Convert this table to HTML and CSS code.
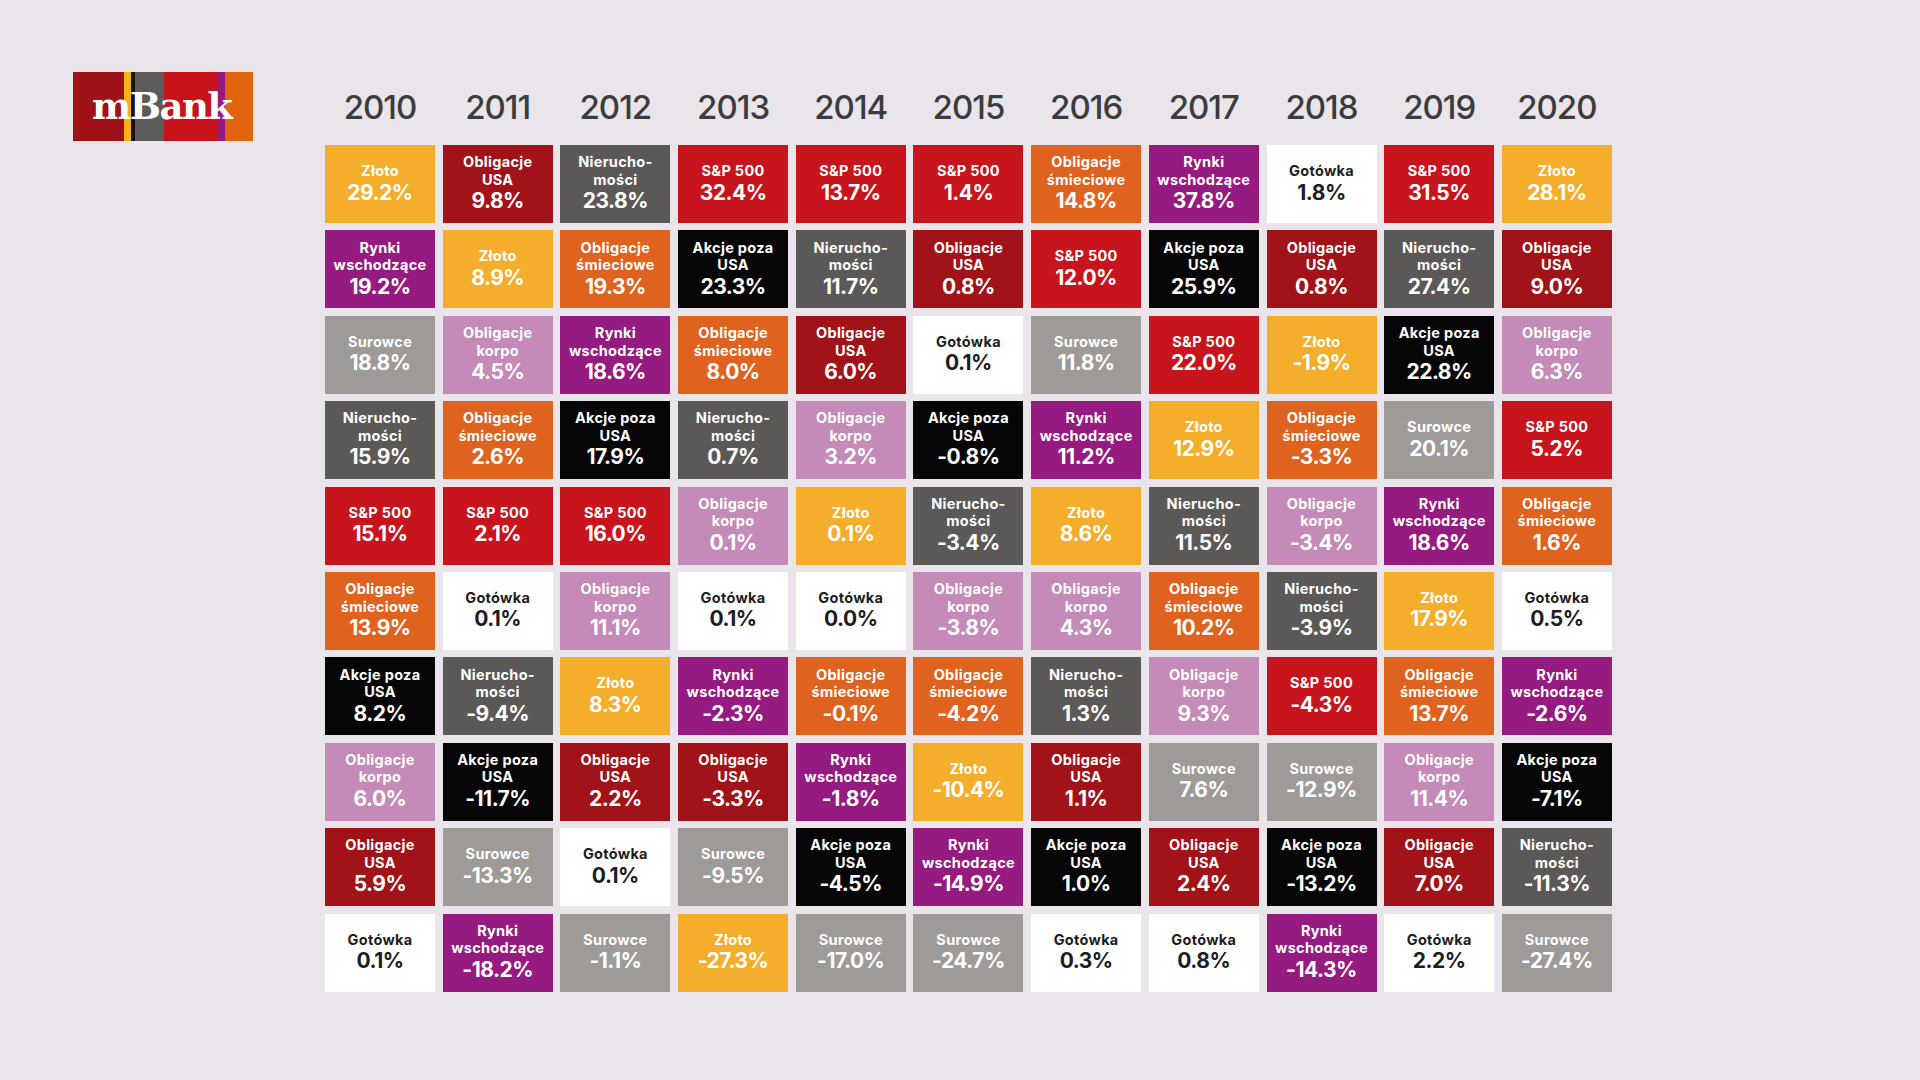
FILE: index.html
```html
<!DOCTYPE html>
<html lang="pl">
<head>
<meta charset="utf-8">
<title>mBank – stopy zwrotu 2010–2020</title>
<link rel="stylesheet" href="styles.css">
</head>
<body>
<div class="page">
  <div class="logo">
    <div class="stripes">
      <span class="s s1"></span><span class="s s2"></span><span class="s s3"></span><span class="s s4"></span><span class="s s5"></span><span class="s s6"></span><span class="s s7"></span>
    </div>
    <span class="logo-text">mBank</span>
  </div>
  <div class="chart">
    <div class="years">
      <div>2010</div><div>2011</div><div>2012</div><div>2013</div><div>2014</div><div>2015</div><div>2016</div><div>2017</div><div>2018</div><div>2019</div><div>2020</div>
    </div>
    <div class="grid">
      <!-- 2010 -->
      <div class="cell zl"><span class="lbl">Złoto</span><span class="pct">29.2%</span></div>
      <div class="cell ryn"><span class="lbl">Rynki<br>wschodzące</span><span class="pct">19.2%</span></div>
      <div class="cell sur"><span class="lbl">Surowce</span><span class="pct">18.8%</span></div>
      <div class="cell nier"><span class="lbl">Nierucho-<br>mości</span><span class="pct">15.9%</span></div>
      <div class="cell sp"><span class="lbl">S&amp;P 500</span><span class="pct">15.1%</span></div>
      <div class="cell smi"><span class="lbl">Obligacje<br>śmieciowe</span><span class="pct">13.9%</span></div>
      <div class="cell akc"><span class="lbl">Akcje poza<br>USA</span><span class="pct">8.2%</span></div>
      <div class="cell korp"><span class="lbl">Obligacje<br>korpo</span><span class="pct">6.0%</span></div>
      <div class="cell usa"><span class="lbl">Obligacje<br>USA</span><span class="pct">5.9%</span></div>
      <div class="cell got"><span class="lbl">Gotówka</span><span class="pct">0.1%</span></div>
      <!-- 2011 -->
      <div class="cell usa"><span class="lbl">Obligacje<br>USA</span><span class="pct">9.8%</span></div>
      <div class="cell zl"><span class="lbl">Złoto</span><span class="pct">8.9%</span></div>
      <div class="cell korp"><span class="lbl">Obligacje<br>korpo</span><span class="pct">4.5%</span></div>
      <div class="cell smi"><span class="lbl">Obligacje<br>śmieciowe</span><span class="pct">2.6%</span></div>
      <div class="cell sp"><span class="lbl">S&amp;P 500</span><span class="pct">2.1%</span></div>
      <div class="cell got"><span class="lbl">Gotówka</span><span class="pct">0.1%</span></div>
      <div class="cell nier"><span class="lbl">Nierucho-<br>mości</span><span class="pct">-9.4%</span></div>
      <div class="cell akc"><span class="lbl">Akcje poza<br>USA</span><span class="pct">-11.7%</span></div>
      <div class="cell sur"><span class="lbl">Surowce</span><span class="pct">-13.3%</span></div>
      <div class="cell ryn"><span class="lbl">Rynki<br>wschodzące</span><span class="pct">-18.2%</span></div>
      <!-- 2012 -->
      <div class="cell nier"><span class="lbl">Nierucho-<br>mości</span><span class="pct">23.8%</span></div>
      <div class="cell smi"><span class="lbl">Obligacje<br>śmieciowe</span><span class="pct">19.3%</span></div>
      <div class="cell ryn"><span class="lbl">Rynki<br>wschodzące</span><span class="pct">18.6%</span></div>
      <div class="cell akc"><span class="lbl">Akcje poza<br>USA</span><span class="pct">17.9%</span></div>
      <div class="cell sp"><span class="lbl">S&amp;P 500</span><span class="pct">16.0%</span></div>
      <div class="cell korp"><span class="lbl">Obligacje<br>korpo</span><span class="pct">11.1%</span></div>
      <div class="cell zl"><span class="lbl">Złoto</span><span class="pct">8.3%</span></div>
      <div class="cell usa"><span class="lbl">Obligacje<br>USA</span><span class="pct">2.2%</span></div>
      <div class="cell got"><span class="lbl">Gotówka</span><span class="pct">0.1%</span></div>
      <div class="cell sur"><span class="lbl">Surowce</span><span class="pct">-1.1%</span></div>
      <!-- 2013 -->
      <div class="cell sp"><span class="lbl">S&amp;P 500</span><span class="pct">32.4%</span></div>
      <div class="cell akc"><span class="lbl">Akcje poza<br>USA</span><span class="pct">23.3%</span></div>
      <div class="cell smi"><span class="lbl">Obligacje<br>śmieciowe</span><span class="pct">8.0%</span></div>
      <div class="cell nier"><span class="lbl">Nierucho-<br>mości</span><span class="pct">0.7%</span></div>
      <div class="cell korp"><span class="lbl">Obligacje<br>korpo</span><span class="pct">0.1%</span></div>
      <div class="cell got"><span class="lbl">Gotówka</span><span class="pct">0.1%</span></div>
      <div class="cell ryn"><span class="lbl">Rynki<br>wschodzące</span><span class="pct">-2.3%</span></div>
      <div class="cell usa"><span class="lbl">Obligacje<br>USA</span><span class="pct">-3.3%</span></div>
      <div class="cell sur"><span class="lbl">Surowce</span><span class="pct">-9.5%</span></div>
      <div class="cell zl"><span class="lbl">Złoto</span><span class="pct">-27.3%</span></div>
      <!-- 2014 -->
      <div class="cell sp"><span class="lbl">S&amp;P 500</span><span class="pct">13.7%</span></div>
      <div class="cell nier"><span class="lbl">Nierucho-<br>mości</span><span class="pct">11.7%</span></div>
      <div class="cell usa"><span class="lbl">Obligacje<br>USA</span><span class="pct">6.0%</span></div>
      <div class="cell korp"><span class="lbl">Obligacje<br>korpo</span><span class="pct">3.2%</span></div>
      <div class="cell zl"><span class="lbl">Złoto</span><span class="pct">0.1%</span></div>
      <div class="cell got"><span class="lbl">Gotówka</span><span class="pct">0.0%</span></div>
      <div class="cell smi"><span class="lbl">Obligacje<br>śmieciowe</span><span class="pct">-0.1%</span></div>
      <div class="cell ryn"><span class="lbl">Rynki<br>wschodzące</span><span class="pct">-1.8%</span></div>
      <div class="cell akc"><span class="lbl">Akcje poza<br>USA</span><span class="pct">-4.5%</span></div>
      <div class="cell sur"><span class="lbl">Surowce</span><span class="pct">-17.0%</span></div>
      <!-- 2015 -->
      <div class="cell sp"><span class="lbl">S&amp;P 500</span><span class="pct">1.4%</span></div>
      <div class="cell usa"><span class="lbl">Obligacje<br>USA</span><span class="pct">0.8%</span></div>
      <div class="cell got"><span class="lbl">Gotówka</span><span class="pct">0.1%</span></div>
      <div class="cell akc"><span class="lbl">Akcje poza<br>USA</span><span class="pct">-0.8%</span></div>
      <div class="cell nier"><span class="lbl">Nierucho-<br>mości</span><span class="pct">-3.4%</span></div>
      <div class="cell korp"><span class="lbl">Obligacje<br>korpo</span><span class="pct">-3.8%</span></div>
      <div class="cell smi"><span class="lbl">Obligacje<br>śmieciowe</span><span class="pct">-4.2%</span></div>
      <div class="cell zl"><span class="lbl">Złoto</span><span class="pct">-10.4%</span></div>
      <div class="cell ryn"><span class="lbl">Rynki<br>wschodzące</span><span class="pct">-14.9%</span></div>
      <div class="cell sur"><span class="lbl">Surowce</span><span class="pct">-24.7%</span></div>
      <!-- 2016 -->
      <div class="cell smi"><span class="lbl">Obligacje<br>śmieciowe</span><span class="pct">14.8%</span></div>
      <div class="cell sp"><span class="lbl">S&amp;P 500</span><span class="pct">12.0%</span></div>
      <div class="cell sur"><span class="lbl">Surowce</span><span class="pct">11.8%</span></div>
      <div class="cell ryn"><span class="lbl">Rynki<br>wschodzące</span><span class="pct">11.2%</span></div>
      <div class="cell zl"><span class="lbl">Złoto</span><span class="pct">8.6%</span></div>
      <div class="cell korp"><span class="lbl">Obligacje<br>korpo</span><span class="pct">4.3%</span></div>
      <div class="cell nier"><span class="lbl">Nierucho-<br>mości</span><span class="pct">1.3%</span></div>
      <div class="cell usa"><span class="lbl">Obligacje<br>USA</span><span class="pct">1.1%</span></div>
      <div class="cell akc"><span class="lbl">Akcje poza<br>USA</span><span class="pct">1.0%</span></div>
      <div class="cell got"><span class="lbl">Gotówka</span><span class="pct">0.3%</span></div>
      <!-- 2017 -->
      <div class="cell ryn"><span class="lbl">Rynki<br>wschodzące</span><span class="pct">37.8%</span></div>
      <div class="cell akc"><span class="lbl">Akcje poza<br>USA</span><span class="pct">25.9%</span></div>
      <div class="cell sp"><span class="lbl">S&amp;P 500</span><span class="pct">22.0%</span></div>
      <div class="cell zl"><span class="lbl">Złoto</span><span class="pct">12.9%</span></div>
      <div class="cell nier"><span class="lbl">Nierucho-<br>mości</span><span class="pct">11.5%</span></div>
      <div class="cell smi"><span class="lbl">Obligacje<br>śmieciowe</span><span class="pct">10.2%</span></div>
      <div class="cell korp"><span class="lbl">Obligacje<br>korpo</span><span class="pct">9.3%</span></div>
      <div class="cell sur"><span class="lbl">Surowce</span><span class="pct">7.6%</span></div>
      <div class="cell usa"><span class="lbl">Obligacje<br>USA</span><span class="pct">2.4%</span></div>
      <div class="cell got"><span class="lbl">Gotówka</span><span class="pct">0.8%</span></div>
      <!-- 2018 -->
      <div class="cell got"><span class="lbl">Gotówka</span><span class="pct">1.8%</span></div>
      <div class="cell usa"><span class="lbl">Obligacje<br>USA</span><span class="pct">0.8%</span></div>
      <div class="cell zl"><span class="lbl">Złoto</span><span class="pct">-1.9%</span></div>
      <div class="cell smi"><span class="lbl">Obligacje<br>śmieciowe</span><span class="pct">-3.3%</span></div>
      <div class="cell korp"><span class="lbl">Obligacje<br>korpo</span><span class="pct">-3.4%</span></div>
      <div class="cell nier"><span class="lbl">Nierucho-<br>mości</span><span class="pct">-3.9%</span></div>
      <div class="cell sp"><span class="lbl">S&amp;P 500</span><span class="pct">-4.3%</span></div>
      <div class="cell sur"><span class="lbl">Surowce</span><span class="pct">-12.9%</span></div>
      <div class="cell akc"><span class="lbl">Akcje poza<br>USA</span><span class="pct">-13.2%</span></div>
      <div class="cell ryn"><span class="lbl">Rynki<br>wschodzące</span><span class="pct">-14.3%</span></div>
      <!-- 2019 -->
      <div class="cell sp"><span class="lbl">S&amp;P 500</span><span class="pct">31.5%</span></div>
      <div class="cell nier"><span class="lbl">Nierucho-<br>mości</span><span class="pct">27.4%</span></div>
      <div class="cell akc"><span class="lbl">Akcje poza<br>USA</span><span class="pct">22.8%</span></div>
      <div class="cell sur"><span class="lbl">Surowce</span><span class="pct">20.1%</span></div>
      <div class="cell ryn"><span class="lbl">Rynki<br>wschodzące</span><span class="pct">18.6%</span></div>
      <div class="cell zl"><span class="lbl">Złoto</span><span class="pct">17.9%</span></div>
      <div class="cell smi"><span class="lbl">Obligacje<br>śmieciowe</span><span class="pct">13.7%</span></div>
      <div class="cell korp"><span class="lbl">Obligacje<br>korpo</span><span class="pct">11.4%</span></div>
      <div class="cell usa"><span class="lbl">Obligacje<br>USA</span><span class="pct">7.0%</span></div>
      <div class="cell got"><span class="lbl">Gotówka</span><span class="pct">2.2%</span></div>
      <!-- 2020 -->
      <div class="cell zl"><span class="lbl">Złoto</span><span class="pct">28.1%</span></div>
      <div class="cell usa"><span class="lbl">Obligacje<br>USA</span><span class="pct">9.0%</span></div>
      <div class="cell korp"><span class="lbl">Obligacje<br>korpo</span><span class="pct">6.3%</span></div>
      <div class="cell sp"><span class="lbl">S&amp;P 500</span><span class="pct">5.2%</span></div>
      <div class="cell smi"><span class="lbl">Obligacje<br>śmieciowe</span><span class="pct">1.6%</span></div>
      <div class="cell got"><span class="lbl">Gotówka</span><span class="pct">0.5%</span></div>
      <div class="cell ryn"><span class="lbl">Rynki<br>wschodzące</span><span class="pct">-2.6%</span></div>
      <div class="cell akc"><span class="lbl">Akcje poza<br>USA</span><span class="pct">-7.1%</span></div>
      <div class="cell nier"><span class="lbl">Nierucho-<br>mości</span><span class="pct">-11.3%</span></div>
      <div class="cell sur"><span class="lbl">Surowce</span><span class="pct">-27.4%</span></div>
    </div>
  </div>
</div>
</body>
</html>
```
FILE: styles.css
```css
html, body {
  margin: 0;
  padding: 0;
  background: #e9e5ea;
}
body {
  width: 1920px;
  height: 1080px;
  overflow: hidden;
  font-family: Inter, "Noto Sans", sans-serif;
}
.page {
  display: flex;
  align-items: flex-start;
  padding: 72px 0 0 73px;
}

/* logo */
.logo {
  position: relative;
  width: 180px;
  height: 69px;
  flex: none;
}
.stripes {
  display: flex;
  height: 100%;
}
.s { display: block; height: 100%; }
.s1 { width: 51px; background: #a11218; }
.s2 { width: 7px; background: #f5b21b; }
.s3 { width: 4px; background: #151313; }
.s4 { width: 29px; background: #5d5c5b; }
.s5 { width: 52.5px; background: #c8131b; }
.s6 { width: 8.5px; background: #951a80; }
.s7 { width: 28px; background: #e2640f; }
.logo-text {
  position: absolute;
  left: 19px;
  top: 9px;
  font-family: "DejaVu Serif", "Liberation Serif", serif;
  font-weight: 700;
  font-size: 37px;
  line-height: 50px;
  letter-spacing: -1.5px;
  color: #ffffff;
}

/* chart */
.chart {
  margin-left: 72px;
}
.years {
  display: grid;
  grid-template-columns: repeat(11, 110px);
  column-gap: 7.7px;
  height: 73px;
  font-family: Inter, "Open Sans", sans-serif;
  font-weight: 500;
  font-size: 33px;
  line-height: 71px;
  color: #3c3b3e;
  text-align: center;
  letter-spacing: -1px;
}
.grid {
  display: grid;
  grid-template-columns: repeat(11, 110px);
  grid-template-rows: repeat(10, 78px);
  column-gap: 7.7px;
  row-gap: 7.4px;
  grid-auto-flow: column;
}
.cell {
  display: flex;
  flex-direction: column;
  align-items: center;
  justify-content: center;
  text-align: center;
  color: #ffffff;
}
.lbl {
  font-size: 14.5px;
  font-weight: 700;
  line-height: 17.5px;
  letter-spacing: 0.3px;
}
.pct {
  font-size: 21px;
  font-weight: 700;
  line-height: 26.5px;
  letter-spacing: -0.5px;
}

.zl   { background: #f5ad2c; }
.usa  { background: #a11219; }
.nier { background: #5a5957; }
.sp   { background: #c8141d; }
.ryn  { background: #951b81; }
.smi  { background: #e0621f; }
.sur  { background: #9e9a97; }
.korp { background: #c48ab8; }
.akc  { background: #060606; }
.got  { background: #ffffff; color: #1d1d1f; }
```
